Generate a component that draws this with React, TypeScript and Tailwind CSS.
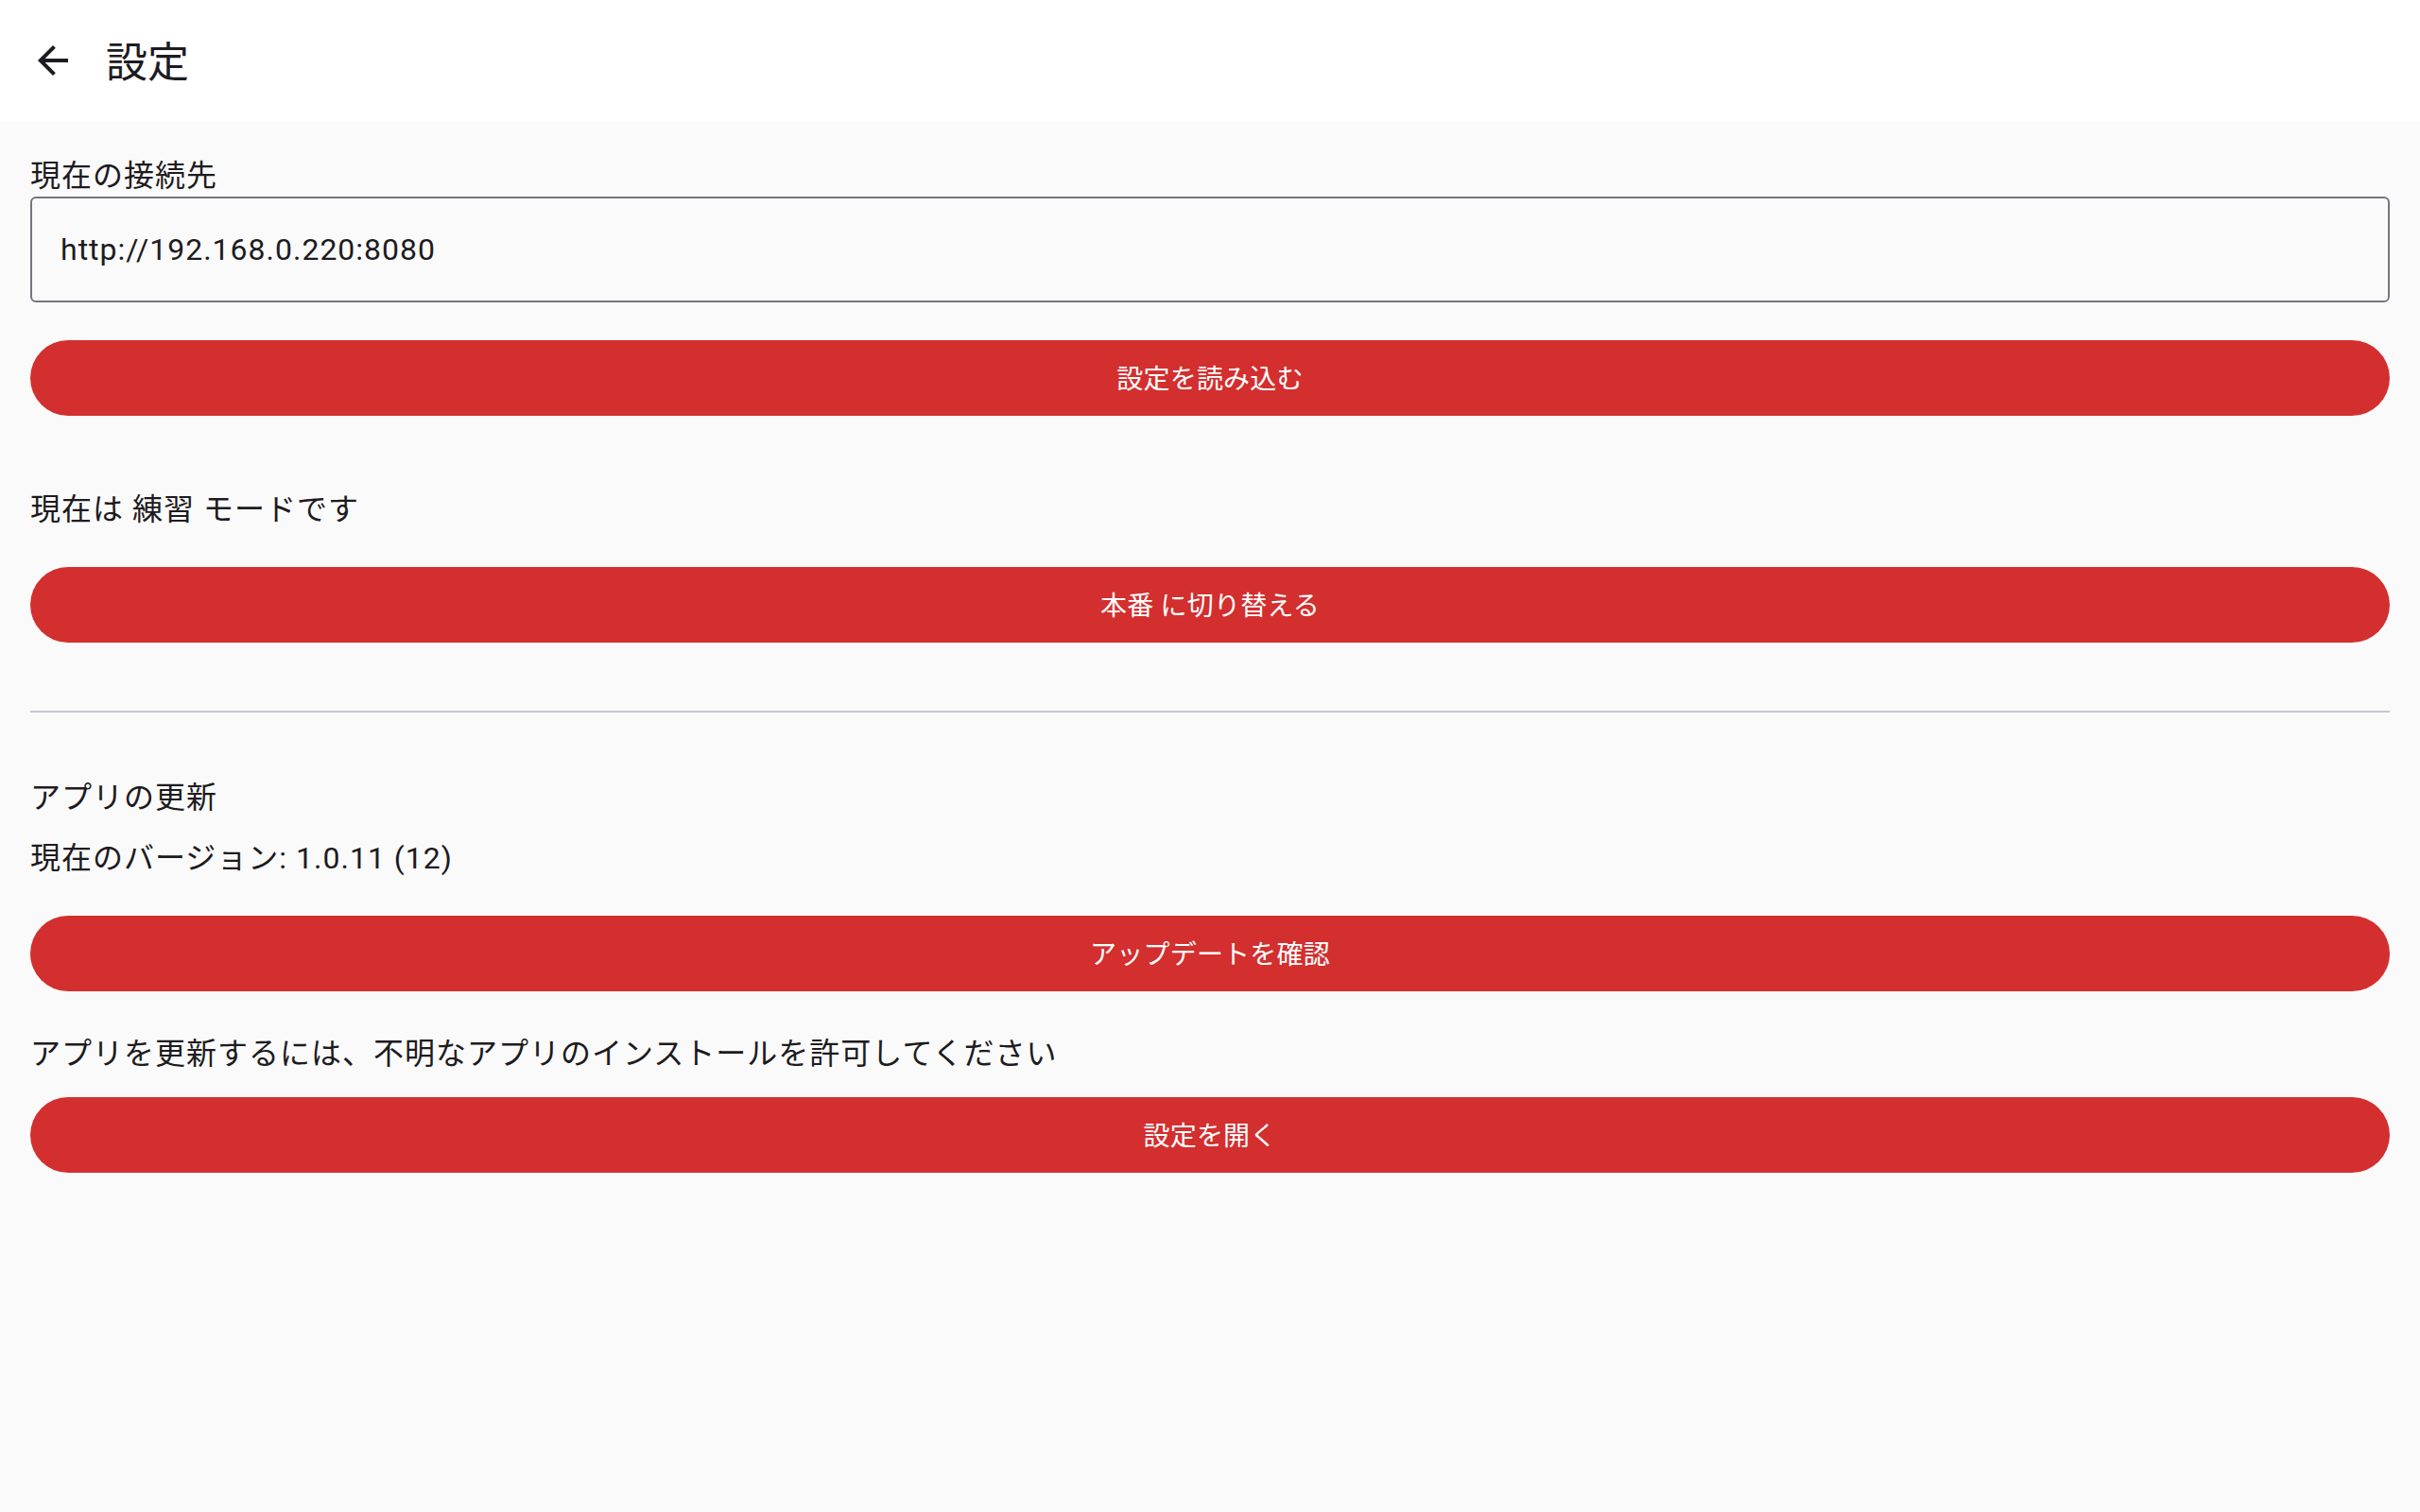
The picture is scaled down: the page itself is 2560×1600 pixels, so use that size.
import React from "react";

const FONT = "font-['Roboto','Noto_Sans_CJK_JP',sans-serif]";

const ArrowBack = () => (
  <svg viewBox="0 0 24 24" className="w-[48px] h-[48px]" fill="currentColor">
    <path d="M20 11H7.83l5.59-5.59L12 4l-8 8 8 8 1.41-1.41L7.83 13H20v-2z" />
  </svg>
);

const RedButton = ({ label, className = "" }: { label: string; className?: string }) => (
  <button
    className={`h-[80px] w-full rounded-full bg-[#d32f2f] text-white text-[28px] leading-[40px] tracking-[0.2px] pt-[4px] flex items-center justify-center ${className}`}
  >
    {label}
  </button>
);

const body = "text-[32px] leading-[48px] tracking-[1px]";

export default function App() {
  return (
    <div className={`min-h-screen bg-[#fafafa] text-[#1d1b20] ${FONT}`}>
      {/* Top app bar */}
      <header className="h-[128px] bg-white flex items-center">
        <div className="ml-[32px] w-[48px] h-[48px] flex items-center justify-center">
          <ArrowBack />
        </div>
        <h1 className="ml-[32px] pt-[5px] text-[44px] leading-[56px]">設定</h1>
      </header>

      <main className="px-[32px] pt-[32px] flex flex-col">
        {/* Connection */}
        <p className={`${body} pt-[2px] -mb-[2px]`}>現在の接続先</p>
        <div className="h-[112px] border-2 border-[#79747e] rounded-[6px] flex items-center px-[30px]">
          <span className={body}>http://192.168.0.220:8080</span>
        </div>
        <RedButton label="設定を読み込む" className="mt-[40px]" />

        {/* Mode */}
        <p className={`mt-[72px] pt-[3px] ${body}`}>現在は 練習 モードです</p>
        <RedButton label="本番 に切り替える" className="mt-[37px]" />

        <div className="mt-[72px] h-[2px] bg-[#cac4d0]" />

        {/* App update */}
        <p className={`mt-[64px] pt-[2px] ${body}`}>アプリの更新</p>
        <p className={`mt-[14px] pt-[2px] ${body}`}>現在のバージョン: 1.0.11 (12)</p>
        <RedButton label="アップデートを確認" className="mt-[37px]" />

        <p className={`mt-[40px] pt-[2px] ${body}`}>
          アプリを更新するには、不明なアプリのインストールを許可してください
        </p>
        <RedButton label="設定を開く" className="mt-[22px]" />
      </main>
    </div>
  );
}
